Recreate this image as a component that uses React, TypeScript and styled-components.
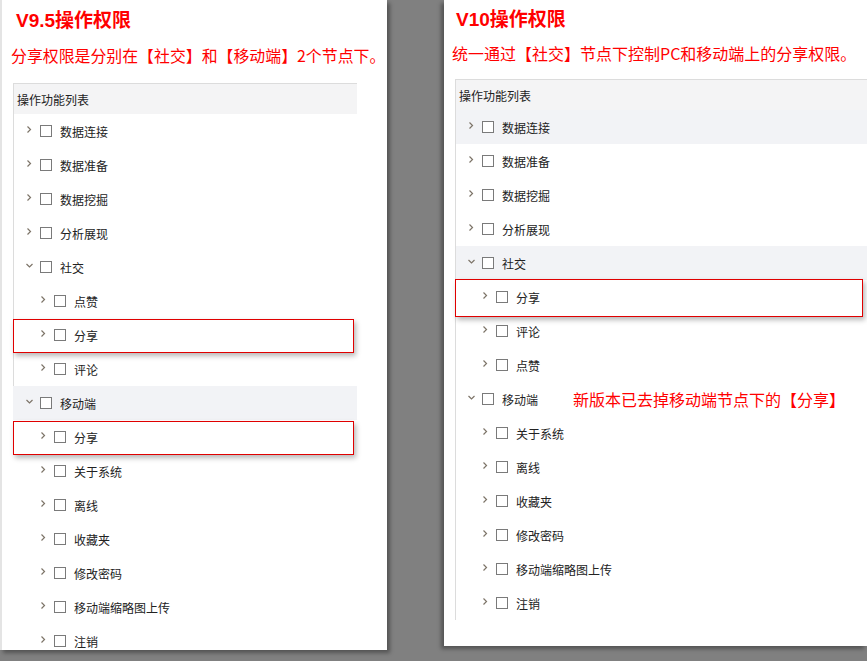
import React from "react";
import styled, { createGlobalStyle } from "styled-components";

const GlobalStyle = createGlobalStyle`
  html, body {
    margin: 0;
    padding: 0;
    background: #808080;
  }
  body {
    font-family: "Noto Sans CJK SC", "Noto Sans", sans-serif;
  }
  #root {
    height: 661px;
    overflow: hidden;
  }
`;

const Page = styled.div`
  display: flex;
  justify-content: space-between;
  align-items: flex-start;
  height: 661px;
`;

const Panel = styled.section<{ $width: number; $height: number; $side: "left" | "right"; $pad: number }>`
  flex: none;
  width: ${(p) => p.$width}px;
  height: ${(p) => p.$height}px;
  background: #fff;
  overflow: hidden;
  box-sizing: border-box;
  padding-left: ${(p) => p.$pad}px;
  padding-right: ${(p) => (p.$side === "left" ? 30 : 0)}px;
  border-left: ${(p) => (p.$side === "left" ? "2px solid #e4e4e4" : "none")};
  box-shadow: ${(p) =>
    p.$side === "left"
      ? "3px 3px 4px rgba(0,0,0,0.35)"
      : "-3px 3px 4px rgba(0,0,0,0.35)"};
`;

const Title = styled.h1<{ $top: number; $indent: number }>`
  margin: ${(p) => p.$top}px 0 0 ${(p) => p.$indent}px;
  font-family: "Liberation Sans", "Noto Sans CJK SC", sans-serif;
  font-weight: bold;
  font-size: 19px;
  line-height: 22px;
  color: #ff0000;
`;

const Note = styled.p<{ $top: number; $size: number; $indent: number }>`
  margin: ${(p) => p.$top}px 0 0 ${(p) => p.$indent}px;
  font-family: "Noto Sans CJK SC", "Liberation Sans", sans-serif;
  font-size: ${(p) => p.$size}px;
  line-height: 20px;
  color: #ff0000;
  white-space: nowrap;
`;

const Table = styled.div<{ $top: number }>`
  margin-top: ${(p) => p.$top}px;
  display: flex;
  flex-direction: column;
`;

const Header = styled.div`
  height: 30px;
  display: flex;
  align-items: center;
  padding-left: 3px;
  background: #f4f4f5;
  border-top: 1px solid #dcdcdc;
  border-left: 1px solid #dcdcdc;
  font-size: 12px;
  color: #222;
`;

const Row = styled.div<{ $level: number; $shade: boolean; $edge: boolean; $boxed: boolean; $boxInset: number }>`
  position: relative;
  z-index: ${(p) => (p.$boxed ? 1 : 0)};
  height: 34px;
  flex-shrink: 0;
  display: flex;
  align-items: center;
  box-sizing: border-box;
  padding-left: ${(p) => 12 + p.$level * 14}px;
  background: ${(p) => (p.$shade ? "#f2f3f6" : "#fff")};
  border-left: 1px solid ${(p) => (p.$edge ? "#dcdcdc" : "transparent")};
  font-size: 12px;
  color: #222;

  ${(p) =>
    p.$boxed &&
    `
    &::after {
      content: "";
      position: absolute;
      left: -1px;
      right: ${p.$boxInset}px;
      top: ${p.$boxInset > 3 ? -1 : 1}px;
      bottom: ${p.$boxInset > 3 ? -3 : -1}px;
      border: 1px solid #e00000;
      box-shadow: 2px 3px 5px rgba(0, 0, 0, 0.28);
      pointer-events: none;
    }
  `}
`;

const Toggle = styled.span`
  width: 14px;
  display: flex;
  align-items: center;
  margin-top: -4px;
`;

const Box = styled.span`
  width: 12px;
  height: 12px;
  box-sizing: border-box;
  border: 1px solid #7a7a7a;
  background: #fff;
  margin-right: 8px;
`;

const Label = styled.span`
  line-height: 14px;
  margin-top: 2px;
`;

const Remark = styled.span`
  margin-left: auto;
  margin-right: 22px;
  font-size: 16px;
  color: #ff0000;
  white-space: nowrap;
`;

const Chevron = ({ open }: { open: boolean }) => (
  <svg width="7" height="7" viewBox="0 0 7 7">
    {open ? (
      <polyline points="0.5,2 3.5,5 6.5,2" fill="none" stroke="#7d7468" strokeWidth="1.2" />
    ) : (
      <polyline points="1.5,0.5 4.5,3.5 1.5,6.5" fill="none" stroke="#7d7468" strokeWidth="1.2" />
    )}
  </svg>
);

type Node = {
  label: string;
  level: number;
  open?: boolean;
  shade?: boolean;
  boxed?: boolean;
  remark?: string;
};

const oldTree: Node[] = [
  { label: "数据连接", level: 0 },
  { label: "数据准备", level: 0 },
  { label: "数据挖掘", level: 0 },
  { label: "分析展现", level: 0 },
  { label: "社交", level: 0, open: true },
  { label: "点赞", level: 1 },
  { label: "分享", level: 1, boxed: true },
  { label: "评论", level: 1 },
  { label: "移动端", level: 0, open: true, shade: true },
  { label: "分享", level: 1, boxed: true },
  { label: "关于系统", level: 1 },
  { label: "离线", level: 1 },
  { label: "收藏夹", level: 1 },
  { label: "修改密码", level: 1 },
  { label: "移动端缩略图上传", level: 1 },
  { label: "注销", level: 1 },
];

const newTree: Node[] = [
  { label: "数据连接", level: 0, shade: true },
  { label: "数据准备", level: 0 },
  { label: "数据挖掘", level: 0 },
  { label: "分析展现", level: 0 },
  { label: "社交", level: 0, open: true, shade: true },
  { label: "分享", level: 1, boxed: true },
  { label: "评论", level: 1 },
  { label: "点赞", level: 1 },
  { label: "移动端", level: 0, open: true, remark: "新版本已去掉移动端节点下的【分享】" },
  { label: "关于系统", level: 1 },
  { label: "离线", level: 1 },
  { label: "收藏夹", level: 1 },
  { label: "修改密码", level: 1 },
  { label: "移动端缩略图上传", level: 1 },
  { label: "注销", level: 1 },
];

function Tree({ nodes, top, edgeRows, boxInset }: { nodes: Node[]; top: number; edgeRows: number; boxInset: number }) {
  return (
    <Table $top={top}>
      <Header>操作功能列表</Header>
      {nodes.map((n, i) => (
        <Row
          key={i}
          $level={n.level}
          $shade={!!n.shade}
          $edge={i < edgeRows}
          $boxed={!!n.boxed}
          $boxInset={boxInset}
        >
          <Toggle>
            <Chevron open={!!n.open} />
          </Toggle>
          <Box />
          <Label>{n.label}</Label>
          {n.remark && <Remark>{n.remark}</Remark>}
        </Row>
      ))}
    </Table>
  );
}

export default function App() {
  return (
    <>
      <GlobalStyle />
      <Page>
        <Panel $width={387} $height={650} $side="left" $pad={11}>
          <Title $top={10} $indent={3}>V9.5操作权限</Title>
          <Note $top={14} $size={15.9} $indent={-2}>
            分享权限是分别在【社交】和【移动端】2个节点下。
          </Note>
          <Tree nodes={oldTree} top={17} edgeRows={8} boxInset={3} />
        </Panel>
        <Panel $width={423} $height={646} $side="right" $pad={11}>
          <Title $top={9} $indent={1}>V10操作权限</Title>
          <Note $top={12} $size={16} $indent={-3}>
            统一通过【社交】节点下控制PC和移动端上的分享权限。
          </Note>
          <Tree nodes={newTree} top={16} edgeRows={15} boxInset={4} />
        </Panel>
      </Page>
    </>
  );
}
